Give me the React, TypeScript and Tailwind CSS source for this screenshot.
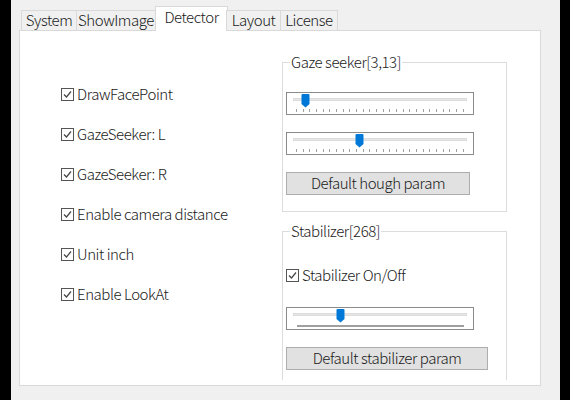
import React from 'react';

const font = { fontFamily: '"Noto Sans CJK JP", "Noto Sans", sans-serif' };

function CheckGlyph() {
  return (
    <svg width="13" height="13" viewBox="0 0 13 13" className="shrink-0">
      <rect x="0.5" y="0.5" width="12" height="12" fill="white" stroke="#555" />
      <path d="M3 6.5 L5.5 9 L10 3.5" fill="none" stroke="#444" strokeWidth="1.2" />
    </svg>
  );
}

function Check({ label }: { label: string }) {
  return (
    <div className="flex items-center gap-[3px] h-[40px] -mt-px mb-px">
      <CheckGlyph />
      <span>{label}</span>
    </div>
  );
}

function Slider({ pos, ticks = true }: { pos: number; ticks?: boolean }) {
  return (
    <div className="relative w-[188px] h-[23px] border border-[#8a8a8a] bg-white">
      <div className="absolute left-[6px] right-[6px] top-[5px] h-[3px] bg-[#e7e7e7] border border-[#dcdcdc]" />
      <svg className="absolute top-[1px]" style={{ left: pos }} width="9" height="14" viewBox="0 0 9 14">
        <path d="M0.5 1 Q0.5 0 1.5 0 H7.5 Q8.5 0 8.5 1 V10 L4.5 13.5 L0.5 10 Z" fill="#0078d7" />
      </svg>
      {ticks ? (
        <div className="absolute left-[9px] right-[9px] top-[16px] flex justify-between">
          {Array.from({ length: 26 }).map((_, i) => (
            <div key={i} className="w-px h-[3px] bg-[#a0a0a0]" />
          ))}
        </div>
      ) : (
        <div className="absolute left-[10px] right-[9px] top-[17px] h-[2px] bg-[#a0a0a0]" />
      )}
    </div>
  );
}

function Button({ label, w }: { label: string; w: string }) {
  return (
    <div className={`${w} h-[23px] border border-[#adadad] bg-[#e1e1e1] flex items-center justify-center`}>
      {label}
    </div>
  );
}

const tabs = [
  { name: 'System', w: 'w-[56px]' },
  { name: 'ShowImage', w: 'w-[80px]' },
  { name: 'Detector', w: 'w-[73px]', active: true },
  { name: 'Layout', w: 'w-[55px]' },
  { name: 'License', w: 'w-[58px]' },
];

export default function App() {
  return (
    <div
      className="w-[570px] h-[400px] bg-black flex pl-[11px] pr-[10px] text-[15px] font-light tracking-[-0.45px] text-[#1a1a1a]"
      style={font}
    >
      <div className="flex-1 bg-[#f0f0f0] pl-[8px] pt-[6px] flex flex-col">
        {/* tab strip */}
        <div className="flex items-end h-[25px] pl-[2px] relative z-10">
          {tabs.map((t) =>
            t.active ? (
              <div
                key={t.name}
                className={`${t.w} h-[25px] -mx-[1px] bg-white border border-b-0 border-[#d9d9d9] flex items-start justify-center leading-[20px]`}
              >
                {t.name}
              </div>
            ) : (
              <div
                key={t.name}
                className={`${t.w} h-[21px] bg-[#f0f0f0] border border-[#d9d9d9] -ml-px first:ml-0 flex items-center justify-center pb-px`}
              >
                {t.name}
              </div>
            )
          )}
        </div>

        {/* panel */}
        <div className="w-[522px] h-[356px] -mt-px border border-[#d9d9d9] bg-white flex">
          <div className="w-[262px] pl-[41px] pt-[44px]">
            <Check label="DrawFacePoint" />
            <Check label="GazeSeeker: L" />
            <Check label="GazeSeeker: R" />
            <Check label="Enable camera distance" />
            <Check label="Unit inch" />
            <Check label="Enable LookAt" />
          </div>

          <div className="h-[349px] overflow-hidden pt-[23px]">
            <fieldset className="w-[225px] h-[158px] border border-[#dcdcdc] pl-[3px] pt-[22px] flex flex-col gap-[17px]">
              <legend className="ml-[4px] px-[1px] leading-[16px]">Gaze seeker[3,13]</legend>
              <Slider pos={14} />
              <Slider pos={68} />
              <Button label="Default hough param" w="w-[184px]" />
            </fieldset>

            <fieldset className="mt-[11px] w-[225px] h-[200px] border border-[#dcdcdc] pl-[3px] pt-[25px] flex flex-col">
              <legend className="ml-[4px] px-[1px] leading-[16px]">Stabilizer[268]</legend>
              <div className="flex items-center gap-[3px]">
                <CheckGlyph />
                <span>Stabilizer On/Off</span>
              </div>
              <div className="mt-[20px]">
                <Slider pos={49} ticks={false} />
              </div>
              <div className="mt-[17px]">
                <Button label="Default stabilizer param" w="w-[202px]" />
              </div>
            </fieldset>
          </div>
        </div>
      </div>
    </div>
  );
}
